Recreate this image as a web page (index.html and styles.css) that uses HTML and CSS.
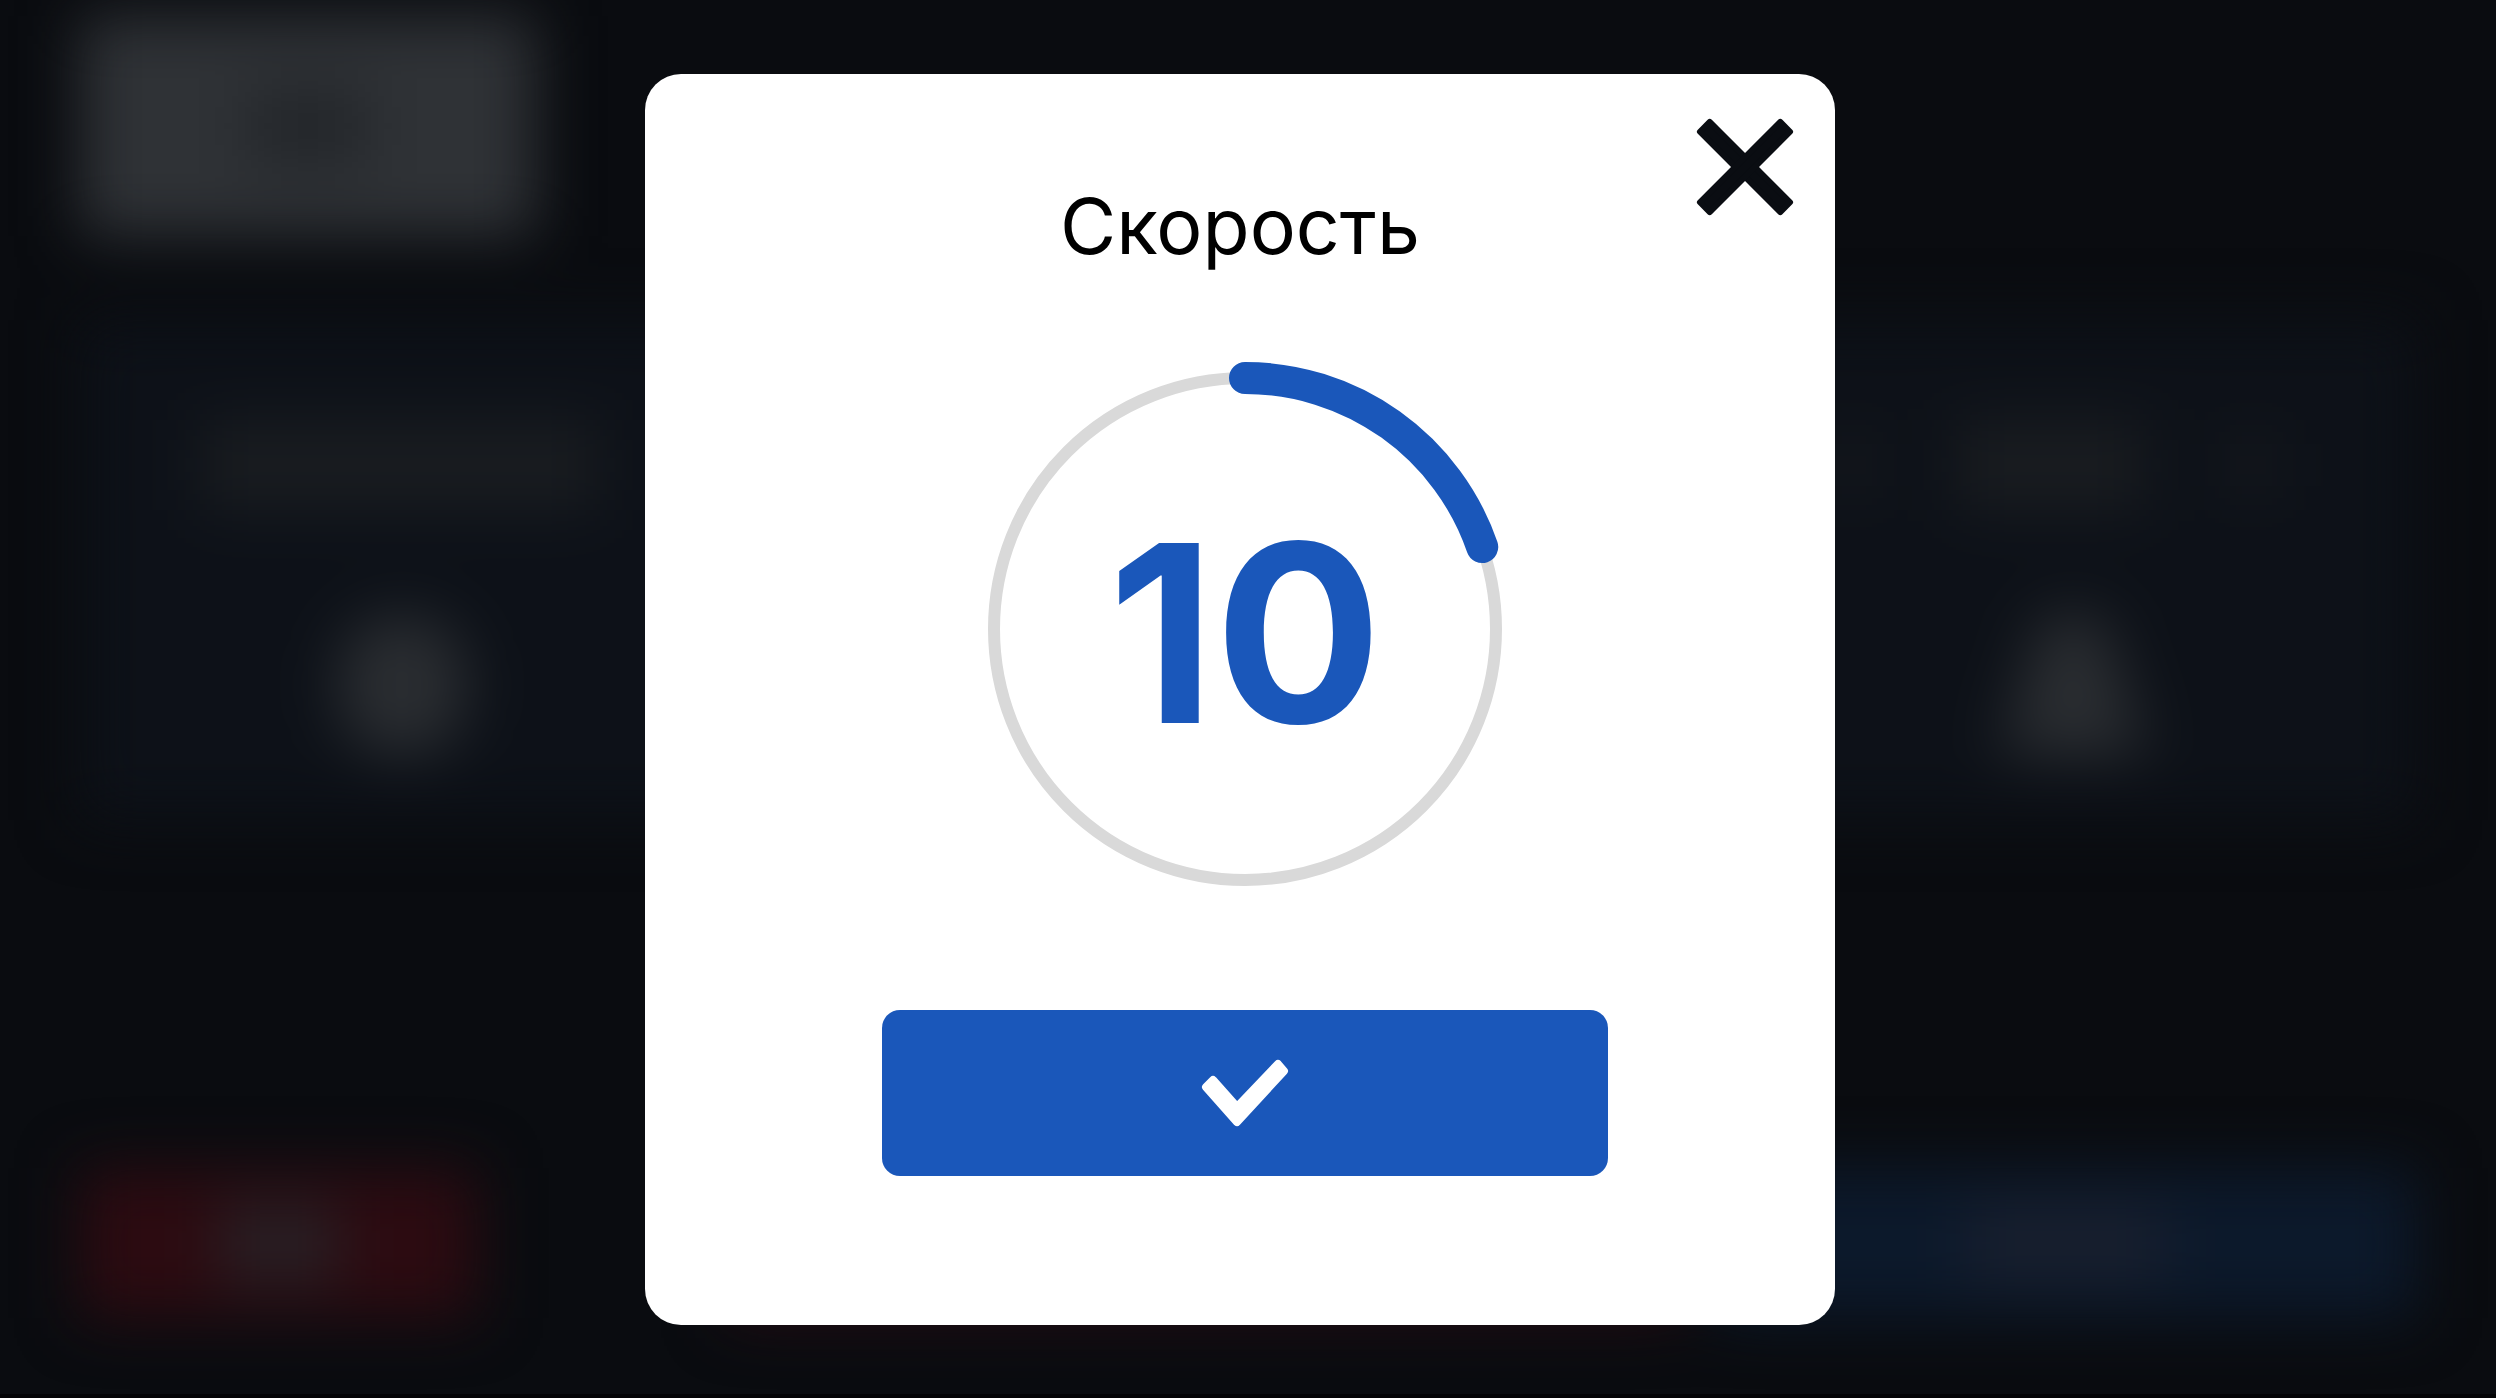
FILE: index.html
```
<!DOCTYPE html>
<html lang="ru">
<head>
    <meta charset="UTF-8">
    <meta name="viewport" content="width=device-width, initial-scale=1.0">
    <title>Скорость</title>
    <link rel="stylesheet" href="styles.css">
</head>
<body>
    <!-- blurred screen behind the dialog -->
    <div class="backdrop" aria-hidden="true">
        <div class="topBar">
            <div class="topButton"><span class="blob"></span></div>
        </div>
        <div class="cards">
            <div class="card">
                <div class="cardTitle"><span class="bar"></span></div>
                <span class="value"></span>
            </div>
            <div class="card">
                <div class="cardTitle">
                    <span class="dot"></span>
                    <span class="bar shortBar"></span>
                    <span class="dot"></span>
                </div>
                <span class="value triangle"></span>
            </div>
        </div>
        <div class="footer">
            <div class="footerButton red"><span class="blob"></span></div>
            <div class="footerButton darkRed"></div>
            <div class="footerButton blue"><span class="blob wide"></span></div>
        </div>
    </div>

    <div class="overlay">
        <div class="modal" role="dialog" aria-modal="true" aria-labelledby="modalTitle">
            <button class="closeButton" type="button" aria-label="Закрыть">
                <svg viewBox="0 0 102 102">
                    <path d="M5 15L15 5L97 87L87 97Z"/>
                    <path d="M87 5L97 15L15 97L5 87Z"/>
                </svg>
            </button>
            <h1 id="modalTitle">Скорость</h1>
            <div class="content">
                <div class="dial" role="meter" aria-labelledby="modalTitle" aria-valuemin="0" aria-valuemax="50" aria-valuenow="10">
                    <svg viewBox="0 0 534 534">
                        <circle class="track" cx="267" cy="267" r="251"/>
                        <circle class="progress" cx="267" cy="267" r="251" pathLength="100" stroke-dasharray="19.7 100" transform="rotate(-90 267 267)"/>
                    </svg>
                    <span class="number">10</span>
                </div>
                <button class="okButton" type="button" aria-label="Применить">
                    <svg viewBox="0 0 88 68">
                        <path d="M5 28L12 21L36 48L77 5L83 12L36 63Z"/>
                    </svg>
                </button>
            </div>
        </div>
    </div>
</body>
</html>
```
FILE: styles.css
```
* {
    box-sizing: border-box;
}
body {
    margin: 0;
    min-height: 100vh;
    display: grid;
    background-color: #0a0c10;
    box-shadow: inset 0 -4px #040406;
    font-family: Inter, "Liberation Sans", sans-serif;
    overflow: hidden;
}

/* screen behind */
.backdrop {
    position: absolute;
    inset: 0;
    display: flex;
    flex-direction: column;
    padding: 16px 80px 80px;
    filter: blur(30px);
}
.topButton {
    display: grid;
    place-items: center;
    width: 456px;
    max-width: 100%;
    height: 220px;
    background-color: #2f3236;
}
.blob {
    width: 120px;
    height: 80px;
    background-color: #23262a;
}
.cards {
    display: grid;
    grid-template-columns: 1fr 1fr;
    gap: 40px;
    margin-top: 84px;
}
.card {
    display: flex;
    flex-direction: column;
    height: 500px;
    padding: 100px 120px;
    gap: 105px;
    background-color: #0d1118;
}
.card:last-child {
    align-items: flex-end;
    padding-right: 140px;
}
.cardTitle {
    display: flex;
    align-items: center;
    gap: 80px;
    height: 100px;
}
.bar {
    width: 400px;
    height: 90px;
    background-color: #191c20;
}
.shortBar {
    width: 190px;
    height: 90px;
}
.dot {
    width: 50px;
    height: 50px;
    background-color: #171a1e;
}
.value {
    flex: none;
    width: 130px;
    height: 140px;
    margin-left: 137px;
    border-radius: 60px;
    background-color: #2a2d31;
}
.triangle {
    width: 150px;
    height: 140px;
    margin-right: 128px;
    border-radius: 0;
    clip-path: polygon(30% 0, 70% 0, 100% 100%, 0 100%);
}
.footer {
    display: flex;
    gap: 250px;
    margin-top: auto;
}
.footerButton {
    display: grid;
    place-items: center;
    height: 150px;
}
.red {
    width: 17%;
    background-color: #2c0b11;
}
.red .blob {
    background-color: #271f24;
}
.darkRed {
    flex: 1;
    background-color: #260b12;
}
.blue {
    width: 30%;
    margin-left: -220px;
    background-color: #0c192b;
}
.blue .wide {
    width: 200px;
    background-color: #181f2e;
}

/* dialog */
.overlay {
    position: relative;
    display: flex;
    align-items: center;
    justify-content: center;
    padding-right: 16px;
}
.modal {
    position: relative;
    width: 100%;
    max-width: 1190px;
    padding: 104px 40px 149px;
    border-radius: 36px;
    background-color: #fff;
    text-align: center;
}
h1 {
    margin: 0 0 88px;
    font-size: 77px;
    font-weight: 400;
    line-height: 96px;
    color: #000;
}
button {
    padding: 0;
    border: none;
    cursor: pointer;
}
.closeButton {
    position: absolute;
    top: 43px;
    right: 40px;
    width: 100px;
    height: 100px;
    background: none;
}
.closeButton svg {
    display: block;
    fill: #0a0d12;
    stroke: #0a0d12;
    stroke-width: 6;
    stroke-linejoin: round;
}
.content {
    display: flex;
    flex-direction: column;
    align-items: center;
    gap: 114px;
    padding-left: 10px;
}
.dial {
    display: grid;
    place-items: center;
    width: 534px;
    max-width: 100%;
}
.dial svg,
.number {
    grid-area: 1 / 1;
}
.dial circle {
    fill: none;
}
.track {
    stroke: #d9d9d9;
    stroke-width: 12;
}
.progress {
    stroke: #1a57ba;
    stroke-width: 32;
    stroke-linecap: round;
}
.number {
    padding-top: 8px;
    font-size: 248px;
    font-weight: 700;
    font-variation-settings: "opsz" 14;
    line-height: 300px;
    color: #1a57ba;
}
.okButton {
    display: grid;
    place-items: center;
    width: 726px;
    max-width: 100%;
    height: 166px;
    border-radius: 18px;
    background-color: #1a57ba;
}
.okButton svg {
    width: 88px;
    fill: #fff;
    stroke: #fff;
    stroke-width: 8;
    stroke-linejoin: round;
}
```
